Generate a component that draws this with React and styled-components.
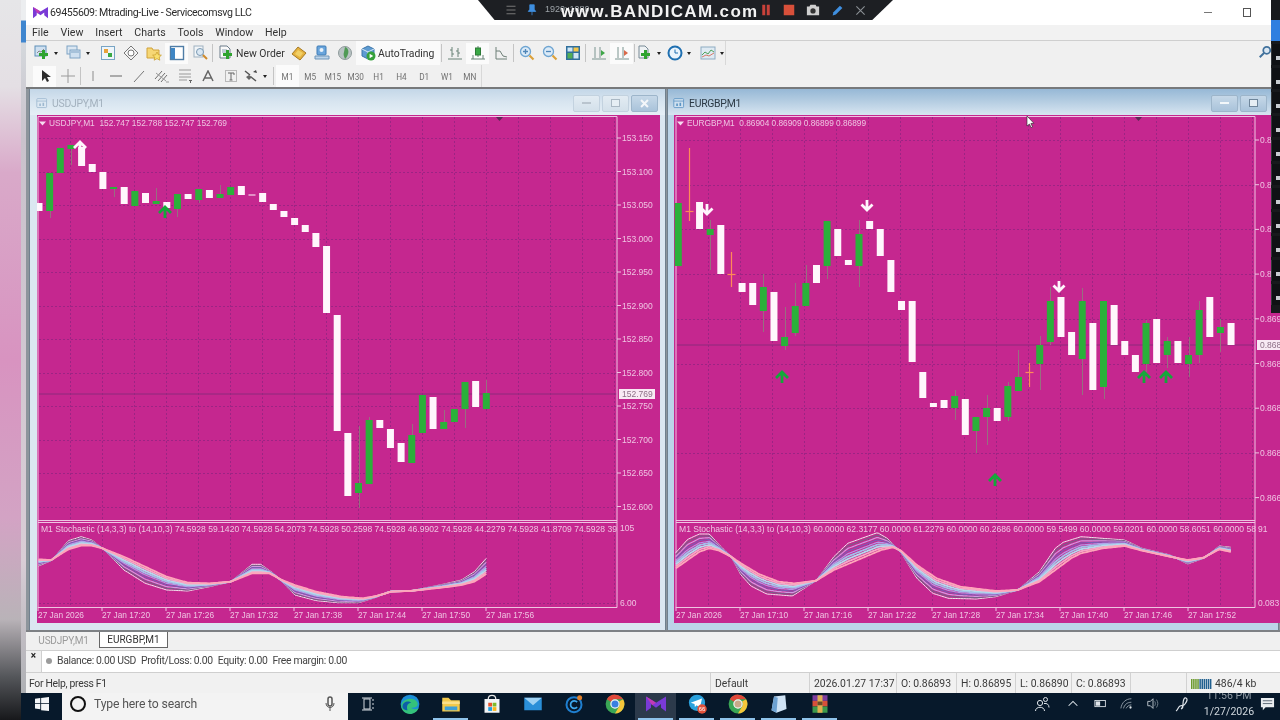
import React from "react";
import styled, { createGlobalStyle } from "styled-components";

const GlobalStyle = createGlobalStyle`
  html, body { margin: 0; padding: 0; background: #000; }
  * { box-sizing: border-box; }
`;

const PINK = "#c5278f";
const AXIS = "#efc3e2";
const GRID = "#9c2484";
const GREEN = "#2bb03a";
const WHITE = "#fff6fc";
const UP_ARROW = "#14a83a";

const Page = styled.div`
  position: relative;
  width: 1280px;
  height: 720px;
  overflow: hidden;
  display: flex;
  font-family: "Roboto", "Liberation Sans", sans-serif;
  color: #333;
  filter: blur(0.35px);
`;
const BlurredSide = styled.div`
  width: 21px;
  flex: none;
  background: linear-gradient(180deg, #e6e6e8 0%, #e4dfe4 12%, #d9a9c9 24%, #d893c0 50%, #d3a3c4 72%, #b9b3b8 86%, #54565a 94%, #17181b 100%);
`;
const Main = styled.div`
  flex: 1;
  min-width: 0;
  display: flex;
  flex-direction: column;
`;
const Upper = styled.div`
  height: 693px;
  display: flex;
`;
const WindowEdge = styled.div`
  width: 5px;
  flex: none;
  background: linear-gradient(180deg, #eceef0 0, #eceef0 20px, #3f86cf 21px, #3f86cf 42px, #d4d8dc 43px, #c9c2cc 140px, #d9cdd6 560px, #aeb0b4 100%);
`;
const AppWindow = styled.div`
  flex: 1;
  min-width: 0;
  display: flex;
  flex-direction: column;
  background: #f0f0f0;
`;

const TitleBar = styled.div`
  height: 25px;
  flex: none;
  background: #fff;
  display: flex;
  align-items: center;
  padding: 0 0 0 7px;
  font-size: 10.6px;
  color: #2c2c2c;
`;
const TitleText = styled.span`
  margin-left: 2px;
  letter-spacing: -0.37px;
`;
const WinControls = styled.div`
  margin-left: auto;
  margin-right: 29px;
  display: flex;
  gap: 31px;
  align-items: center;
`;
const MinGlyph = styled.span`
  display: block;
  width: 8px;
  height: 1px;
  background: #777;
`;
const MaxGlyph = styled.span`
  display: block;
  width: 8px;
  height: 9px;
  border: 1px solid #555;
`;

const MenuBar = styled.div`
  height: 16px;
  flex: none;
  display: flex;
  align-items: center;
  gap: 11.9px;
  padding-left: 6px;
  font-size: 10.6px;
  color: #333;
  background: #f2f2f2;
  border-bottom: 1px solid #cfcfcf;
`;
const ToolRow = styled.div`
  height: ${(p) => p.$h}px;
  flex: none;
  display: flex;
  align-items: center;
  padding-left: 7px;
  background: #f0f0f0;
  position: relative;
  border-bottom: ${(p) => (p.$last ? "2px solid #77797b" : "none")};
`;
const Strip = styled.div`
  display: flex;
  align-items: center;
  height: 100%;
  border-right: 1px solid #d8d8d8;
`;
const ToolBtn = styled.div`
  width: ${(p) => p.$w || 23}px;
  height: ${(p) => (p.$on ? "21px" : "100%")};
  flex: none;
  display: flex;
  align-items: center;
  justify-content: center;
  background: ${(p) => (p.$on ? "#fbfbfb" : "transparent")};
`;
const DropBtn = styled.div`
  width: ${(p) => p.$w || 32}px;
  flex: none;
  display: flex;
  align-items: center;
  padding-left: 1px;
  gap: 2px;
`;
const Caret = styled.span`
  width: 0;
  height: 0;
  margin-left: 2px;
  border-left: 2.5px solid transparent;
  border-right: 2.5px solid transparent;
  border-top: 3px solid #222;
`;
const Sep = styled.span`
  flex: none;
  width: 1px;
  height: 18px;
  margin: 0 ${(p) => p.$m || 1}px;
  background: #c4c4c4;
`;
const LabelBtn = styled.div`
  width: ${(p) => p.$w}px;
  height: 100%;
  flex: none;
  display: flex;
  align-items: center;
  gap: 2px;
  padding-left: 4px;
  font-size: 10.4px;
  color: #333;
  background: ${(p) => (p.$on ? "#fafafa" : "transparent")};
`;
const Period = styled.div`
  width: 22.8px;
  height: 100%;
  flex: none;
  display: flex;
  align-items: center;
  justify-content: center;
  padding-top: 1px;
  font-size: 8.2px;
  color: #707070;
  background: ${(p) => (p.$on ? "#fbfbfb" : "transparent")};
`;
const SearchGlyph = styled.div`
  position: absolute;
  right: 8px;
  top: 4px;
`;

const Mdi = styled.div`
  height: 543px;
  flex: none;
  display: flex;
  gap: 1px;
  padding-left: 3px;
  background: #8d959c;
  border-bottom: 2px solid #7d8084;
`;
const ChartWindow = styled.div`
  width: ${(p) => p.$w}px;
  flex: none;
  display: flex;
  flex-direction: column;
  padding: 0 ${(p) => p.$pr}px 7px ${(p) => p.$pl}px;
  border-left: 1px solid #70808e;
  border-right: 1px solid #70808e;
  background: ${(p) => (p.$active ? "#bcd4e8" : "#dbe7f1")};
`;
const WinHeader = styled.div`
  height: 26px;
  flex: none;
  margin: 0 -${(p) => p.$pr}px 0 -${(p) => p.$pl}px;
  padding: 2px ${(p) => p.$br}px 0 ${(p) => p.$pl - 1}px;
  display: flex;
  align-items: center;
  gap: 3px;
  font-size: 10.4px;
  letter-spacing: -0.25px;
  color: ${(p) => (p.$active ? "#2c3a46" : "#a3b1be")};
  background: ${(p) =>
    p.$active
      ? "linear-gradient(180deg, #96b8d6 0%, #b3cce1 45%, #d7e5f1 100%)"
      : "linear-gradient(180deg, #c4d7e8 0%, #d8e5f0 50%, #e6eff6 100%)"};
`;
const HeaderBtns = styled.div`
  margin-left: auto;
  display: flex;
  gap: 2px;
`;
const HeaderBtn = styled.div`
  width: 27px;
  height: 17px;
  border: 1px solid ${(p) => (p.$active ? "#9db5ca" : "#c3d2df")};
  border-radius: 2px;
  background: ${(p) => (p.$active ? "linear-gradient(180deg, #c6d8e8, #a9c3da)" : "linear-gradient(180deg, #e3ecf3, #d3e0ea)")};
  display: flex;
  align-items: center;
  justify-content: center;
  color: ${(p) => (p.$active ? "#f3f7fa" : "#b9c4ce")};
`;
const MinBar = styled.span`
  display: block;
  width: 9px;
  height: 2px;
  background: currentColor;
`;
const MaxBox = styled.span`
  display: block;
  width: 9px;
  height: 8px;
  border: 1.5px solid ${(p) => (p.$active ? "#6f869b" : "#aab8c4")};
  background: #e6eef4;
`;
const ChartSvg = styled.svg`
  display: block;
  flex: none;
  background: ${PINK};
  font-family: "Liberation Sans", sans-serif;
  font-size: 8.5px;
`;
const IconSvg = styled.svg`
  display: block;
  flex: none;
`;

const TabBar = styled.div`
  height: 19px;
  flex: none;
  display: flex;
  align-items: flex-start;
  padding-left: 2px;
  border-bottom: 1px solid #cfcfcf;
`;
const Tab = styled.div`
  width: ${(p) => p.$w}px;
  height: 16px;
  display: flex;
  align-items: center;
  justify-content: center;
  font-size: 10px;
  letter-spacing: ${(p) => (p.$active ? "0" : "-0.2px")};
  color: ${(p) => (p.$active ? "#333" : "#9a9a9a")};
  background: ${(p) => (p.$active ? "#fff" : "transparent")};
  border: ${(p) => (p.$active ? "1px solid #666" : "none")};
  border-top: none;
`;
const Terminal = styled.div`
  height: 22px;
  flex: none;
  display: flex;
  border-bottom: 1px solid #cfcfcf;
`;
const TerminalClose = styled.div`
  width: 15px;
  flex: none;
  text-align: center;
  font-size: 10px;
  line-height: 10px;
  font-weight: 700;
  color: #222;
`;
const BalancePanel = styled.div`
  flex: 1;
  display: flex;
  align-items: center;
  gap: 5px;
  padding: 0 0 2px 4px;
  background: #fff;
  border-left: 1px solid #cfcfcf;
  font-size: 10.4px;
  letter-spacing: -0.33px;
  color: #444;
`;
const Dot = styled.span`
  width: 6px;
  height: 6px;
  border-radius: 50%;
  background: #9b9b9b;
`;
const StatusBar = styled.div`
  height: 20px;
  flex: none;
  display: flex;
  align-items: center;
  font-size: 10.4px;
  color: #3a3a3a;
  background: #f1f1f1;
`;
const StatusHelp = styled.div`
  width: 684px;
  padding: 1px 0 0 3px;
  letter-spacing: -0.3px;
`;
const StatusCell = styled.div`
  width: ${(p) => p.$w}px;
  height: 100%;
  flex: none;
  display: flex;
  align-items: center;
  gap: 3px;
  padding: 1px 0 0 4px;
  border-left: 1px solid #d2d2d2;
`;

const Taskbar = styled.div`
  height: 27px;
  flex: none;
  display: flex;
  align-items: stretch;
  background: #07192b;
`;
const StartBtn = styled.div`
  width: 41px;
  flex: none;
  display: flex;
  align-items: center;
  justify-content: center;
  padding-bottom: 5px;
`;
const SearchBox = styled.div`
  width: 286px;
  flex: none;
  display: flex;
  align-items: center;
  gap: 8px;
  padding: 0 10px 5px 8px;
  background: #f3f3f3;
  font-size: 12.2px;
  letter-spacing: -0.15px;
  color: #555;
`;
const SearchRing = styled.span`
  width: 16px;
  height: 16px;
  border-radius: 50%;
  border: 2.5px solid #111;
`;
const MicSlot = styled.span`
  margin-left: auto;
  display: flex;
`;
const TaskIcon = styled.div`
  position: relative;
  width: 41px;
  flex: none;
  display: flex;
  align-items: center;
  justify-content: center;
  padding-bottom: 5px;
  background: ${(p) => (p.$on ? "#2c3a4b" : "transparent")};
  &::after {
    content: "";
    display: ${(p) => (p.$running ? "block" : "none")};
    position: absolute;
    left: 3px;
    right: 3px;
    bottom: 0;
    height: 2px;
    background: #8fc3ea;
  }
`;
const Tray = styled.div`
  margin-left: auto;
  display: flex;
  align-items: center;
  padding-bottom: 5px;
`;
const TrayIcon = styled.div`
  width: ${(p) => p.$w}px;
  flex: none;
  display: flex;
  justify-content: center;
`;
const Clock = styled.div`
  width: 62px;
  height: 27px;
  flex: none;
  margin-bottom: -5px;
  overflow: hidden;
  text-align: center;
  font-size: 10.6px;
  line-height: 13px;
  color: #cfd6dc;
`;
const ClockTime = styled.div`
  margin-top: -4px;
  color: #8e99a3;
`;
const ClockDate = styled.div`
  margin-top: 3px;
`;
const Notify = styled.div`
  width: 20px;
  flex: none;
  display: flex;
  justify-content: flex-start;
`;

const RecorderBar = styled.div`
  position: absolute;
  left: 478px;
  top: 0;
  width: 415px;
  height: 20px;
  display: flex;
  align-items: center;
  gap: 9px;
  padding-left: 27px;
  background: #1d1f23;
  clip-path: polygon(0 0, 100% 0, 95% 100%, 4% 100%);
  font-family: "Liberation Sans", sans-serif;
`;
const RecorderSize = styled.span`
  position: absolute;
  left: 67px;
  top: 4px;
  font-size: 9px;
  color: #9da3a8;
`;
const Watermark = styled.span`
  position: absolute;
  left: 83px;
  top: 2px;
  font-size: 17px;
  font-weight: 700;
  letter-spacing: 1.35px;
  color: #f3f3f3;
  white-space: nowrap;
`;
const RecorderTools = styled.div`
  position: absolute;
  left: 282px;
  top: 3px;
  display: flex;
  align-items: center;
  gap: 11px;
`;
const RightDock = styled.div`
  position: absolute;
  right: 0;
  top: 0;
  width: 9px;
  height: 313px;
  padding-top: 20px;
  display: flex;
  flex-direction: column;
  gap: 3px;
  background: #17191c;
`;
const DockBlue = styled.div`
  height: 21px;
  background: #2f7fe0;
`;
const DockItem = styled.div`
  height: 21px;
  background: #0f1114;
  border-left: 1px solid #33373b;
  position: relative;
  &::after {
    content: "";
    position: absolute;
    left: 4px;
    top: 12px;
    width: 5px;
    height: 4px;
    background: #c8ccd0;
  }
`;

/* ---------- chart data ---------- */
// [type, bodyTop, bodyBottom, wickTop, wickBottom]
const usdCandles = [
  ["w",203,211],["g",173,211,173,218],["g",148,173],["g",145,149,145,165],["w",147,166],
  ["w",164,172],["w",172,189],["g",187,189,187,197],["w",187,204],["g",191,206],
  ["w",193,203],["g",201,204,188,204],["w",202,208],["g",194,209,194,217],["w",194,199],
  ["g",189,200,189,203],["w",190,198],["g",194,198,185,198],["g",187,195],["w",186,195],
  ["w",194.5,195.5],["w",193,202],["w",204,210],["w",211,217],["w",218,225],
  ["w",225,232],["w",233,247],["w",246,313],["w",315,431],["w",433,496],
  ["g",483,493,426,508],["g",420,484,417,484],["w",420,428],["w",429,448],["w",443,462],
  ["g",435,463,424,463],["g",395,433],["w",397,429],["g",422,429,410,429],["g",409,422],
  ["g",382,409,382,428],["w",381,407],["g",393,409,380,409],
];
const eurCandles = [
  ["g",203,266],["o",211,211,148,221],["w",202,229],["g",229,235,220,270],["w",225,274],
  ["o",274,274,252,287],["w",283,292],["w",283,305],["g",287,311,274,332],["w",292,341],
  ["g",337,346,307,350],["g",306,333,283,336],["g",283,306,265,306],["w",265,283],["g",221,266,221,279],
  ["w",229,256],["w",260,265],["g",234,266,220,287],["w",221,229],["w",229,256],
  ["w",260,292],["w",301,310],["w",301,362],["w",372,398],["w",403,407],
  ["w",400,408],["g",396,408,390,420],["w",399,435],["g",417,431,417,453],["g",408,417,395,445],
  ["w",408,421],["g",386,417,382,421],["g",377,391,350,391],["o",372,372,363,387],["g",345,364,336,390],
  ["g",301,342,287,345],["w",297,337],["w",332,355],["g",301,359,288,395],["w",323,390],
  ["g",301,387,301,399],["w",305,345],["w",341,355],["w",355,372],["g",323,364,320,372],
  ["w",319,363],["g",341,355,337,368],["w",341,363],["g",355,364,337,377],["g",310,355,301,363],
  ["w",297,337],["g",327,333,319,352],["w",323,345],
];

// fast (white) and slow (pink) stochastic edges as zoomed [x, y] pairs
const usdFast = [[90,168],[120,152],[160,92],[190,80],[215,90],[240,115],[290,180],[340,220],[390,240],[440,243],[490,230],[540,215],[590,163],[610,163],[640,190],[690,255],[740,272],[790,278],[840,278],[880,262],[915,243],[960,243],[1040,222],[1080,210],[1110,185],[1138,145]];
const usdSlow = [[90,148],[120,150],[160,118],[190,107],[215,107],[240,115],[290,140],[340,170],[390,200],[440,218],[490,220],[540,215],[590,190],[630,190],[660,210],[690,225],[740,245],[800,260],[850,265],[880,258],[915,245],[960,243],[1040,232],[1080,225],[1110,215],[1138,192]];
const eurFast = [[40,128],[70,88],[100,72],[125,72],[150,105],[180,140],[205,195],[230,228],[270,252],[335,258],[395,212],[440,140],[475,100],[510,85],[550,68],[575,85],[610,128],[650,205],[690,250],[730,265],[800,267],[850,260],[905,240],[960,185],[1000,115],[1020,97],[1065,80],[1120,85],[1175,90],[1220,115],[1290,135],[1335,162],[1375,145],[1415,108],[1445,112]];
const eurSlow = [[40,175],[70,150],[100,125],[125,115],[150,122],[180,140],[205,160],[250,192],[300,215],[340,220],[395,212],[440,180],[500,150],[560,120],[590,112],[610,122],[650,165],[700,205],[760,230],[850,243],[905,240],[960,215],[1000,180],[1040,145],[1065,130],[1120,115],[1175,108],[1220,122],[1290,140],[1335,150],[1375,143],[1415,118],[1445,126]];
const ribbonColors = ["#f0e8ee", "#7a5f88", "#d09ae0", "#7d5cb4", "#b696e6", "#a4c0ea", "#b4dcec", "#f7a8c6", "#ffa6ba"];

const sampleAt = (pts, x) => {
  for (let i = 1; i < pts.length; i++) {
    if (x <= pts[i][0]) {
      const t = (x - pts[i - 1][0]) / (pts[i][0] - pts[i - 1][0]);
      return pts[i - 1][1] + (pts[i][1] - pts[i - 1][1]) * t;
    }
  }
  return pts[pts.length - 1][1];
};

const Ribbon = ({ fast, slow, sx, ox }) => {
  const start = fast[0][0];
  const end = fast[fast.length - 1][0];
  const lines = ribbonColors.map((color, i) => {
    const t = i / (ribbonColors.length - 1);
    let d = "";
    for (let x = start; x <= end; x += 4) {
      const y = sampleAt(fast, x) * (1 - t) + sampleAt(slow, x) * t;
      d += `${d ? "L" : "M"}${(ox + x / sx).toFixed(1)} ${(510 + y / 3).toFixed(1)}`;
    }
    return <path key={color} d={d} fill="none" stroke={color} strokeWidth={i === 0 ? 1 : i >= 5 ? 1.8 : 1.2} />;
  });
  return <g>{lines}</g>;
};

const Candles = ({ data, x0, step }) =>
  data.map(([type, top, bottom, wt, wb], i) => {
    const x = x0 + i * step;
    const wx = Math.round(x) + 0.5;
    if (type === "o") {
      return (
        <g key={i} stroke="#ff8a58" strokeWidth="1.2">
          <line x1={wx} x2={wx} y1={wt} y2={wb} />
          <line x1={wx - 4} x2={wx + 4} y1={top + 0.5} y2={top + 0.5} />
        </g>
      );
    }
    return (
      <g key={i}>
        {wt !== undefined && <line x1={wx} x2={wx} y1={wt} y2={wb} stroke="#96707f" strokeWidth="1" />}
        <rect x={x - 3.5} y={top} width="7" height={bottom - top} fill={type === "g" ? GREEN : WHITE} />
      </g>
    );
  });

const Arrow = ({ x, y, up, color }) => (
  <path
    d={up ? `M${x} ${y + 12}V${y + 1}M${x - 6} ${y + 7}L${x} ${y + 1}L${x + 6} ${y + 7}` : `M${x} ${y}V${y + 10}M${x - 5.5} ${y + 4.5}L${x} ${y + 10}L${x + 5.5} ${y + 4.5}`}
    fill="none"
    stroke={color}
    strokeWidth="2.8"
  />
);

const Grid = ({ left, right, xs, ys, top, bottom }) => (
  <g stroke={GRID} strokeWidth="1" strokeDasharray="2 2">
    {xs.map((x) => <line key={x} x1={x + 0.5} x2={x + 0.5} y1={top} y2={bottom} />)}
    {ys.map((y) => <line key={y} x1={left} x2={right} y1={Math.round(y) + 0.5} y2={Math.round(y) + 0.5} />)}
  </g>
);

const range = (from, to, step) => {
  const out = [];
  for (let v = from; v <= to; v += step) out.push(v);
  return out;
};

const Frame = ({ left, right }) => (
  <g fill="none" stroke={AXIS} strokeWidth="1">
    <path d={`M${left} 116.5H${right}V607.5H${left}Z`} />
    <path d={`M${left} 520.5H${right}M${left} 522.5H${right}`} />
  </g>
);

const TimeAxis = ({ left, labels }) =>
  labels.map((t, i) => {
    const x = left + i * 64;
    return (
      <g key={t}>
        <line x1={x} x2={x} y1="607" y2="611" stroke={AXIS} />
        <text x={x} y="618" fill={AXIS} textLength={i === 0 ? 46 : 48} lengthAdjust="spacingAndGlyphs">{t}</text>
      </g>
    );
  });

const ChartHead = ({ x, text, len }) => (
  <g>
    <path d={`M${x - 4} 121.5h7l-3.5 4z`} fill="#f6dcef" />
    <text x={x + 6} y="126" fill={AXIS} textLength={len} lengthAdjust="spacingAndGlyphs">{text}</text>
  </g>
);

const usdPrices = ["153.150","153.100","153.050","153.000","152.950","152.900","152.850","152.800","152.750","152.700","152.650","152.600"];
const usdTimes = ["27 Jan 2026","27 Jan 17:20","27 Jan 17:26","27 Jan 17:32","27 Jan 17:38","27 Jan 17:44","27 Jan 17:50","27 Jan 17:56"];
const eurTimes = ["27 Jan 2026","27 Jan 17:10","27 Jan 17:16","27 Jan 17:22","27 Jan 17:28","27 Jan 17:34","27 Jan 17:40","27 Jan 17:46","27 Jan 17:52"];
// the window runs past the screen edge, so only the start of each price shows
const eurPrices = ["0.8","0.8","0.8","0.8","0.869","0.868","0.868","0.868","0.866"];

const UsdChart = () => {
  const ys = range(0, 11, 1).map((i) => 138 + i * 33.5);
  const xs = range(70, 617, 32);
  return (
    <ChartSvg width="623" height="508" viewBox="37 115 623 508">
      <Grid left={39} right={617} xs={xs} ys={ys} top={117} bottom={520} />
      <Grid left={39} right={617} xs={xs} ys={[]} top={523} bottom={607} />
      <line x1="39" x2="617" y1="603.5" y2="603.5" stroke={GRID} strokeDasharray="2 2" />
      <line x1="39" x2="617" y1="394" y2="394" stroke="#8d2a7c" />
      <Frame left={38} right={617} />
      <path d="M496 117h7l-3.5 4z" fill="#5a2a55" />
      <ChartHead x={43} text={"USDJPY,M1\u00A0\u00A0152.747 152.788 152.747 152.769"} len={178} />
      <Candles data={usdCandles} x0={39} step={10.65} />
      <Arrow x={80} y={141} up color={WHITE} />
      <Arrow x={165} y={206} up color={UP_ARROW} />
      {usdPrices.map((p, i) => (
        <g key={p}>
          <line x1="617" x2="621" y1={ys[i]} y2={ys[i]} stroke={AXIS} />
          <text x="622" y={ys[i] + 3} fill={AXIS}>{p}</text>
        </g>
      ))}
      <rect x="619" y="389" width="36" height="10" fill="#f8eaf4" />
      <text x="622" y="397" fill="#8d6f86">152.769</text>
      <text x="41" y="532" fill={AXIS} textLength="576" lengthAdjust="spacingAndGlyphs">
        M1 Stochastic (14,3,3) to (14,10,3) 74.5928 59.1420 74.5928 54.2073 74.5928 50.2598 74.5928 46.9902 74.5928 44.2279 74.5928 41.8709 74.5928 39
      </text>
      <Ribbon fast={usdFast} slow={usdSlow} sx={2.34} ox={0} />
      <text x="620" y="531" fill={AXIS}>105</text>
      <text x="620" y="606" fill={AXIS}>6.00</text>
      <TimeAxis left={38} labels={usdTimes} />
    </ChartSvg>
  );
};

const EurChart = () => {
  const ys = range(0, 8, 1).map((i) => 140 + i * 44.7);
  const xs = range(708, 1255, 32);
  return (
    <ChartSvg width="606" height="508" viewBox="674 115 606 508">
      <Grid left={677} right={1255} xs={xs} ys={ys} top={117} bottom={520} />
      <Grid left={677} right={1255} xs={xs} ys={[]} top={523} bottom={607} />
      <line x1="677" x2="1255" y1="345" y2="345" stroke="#8d2a7c" />
      <Frame left={676} right={1255} />
      <path d="M1135 117h7l-3.5 4z" fill="#5a2a55" />
      <ChartHead x={681} text={"EURGBP,M1\u00A0\u00A00.86904 0.86909 0.86899 0.86899"} len={179} />
      <Candles data={eurCandles} x0={678.3} step={10.63} />
      <Arrow x={707} y={204} color={WHITE} />
      <Arrow x={867} y={200} color={WHITE} />
      <Arrow x={1059} y={281} color={WHITE} />
      <Arrow x={782} y={371} up color={UP_ARROW} />
      <Arrow x={995} y={474} up color={UP_ARROW} />
      <Arrow x={1144} y={371} up color={UP_ARROW} />
      <Arrow x={1166} y={371} up color={UP_ARROW} />
      {ys.map((y, i) => (
        <g key={y}>
          <line x1="1255" x2="1259" y1={y} y2={y} stroke={AXIS} />
          <text x="1260" y={y + 3} fill={AXIS}>{eurPrices[i]}</text>
        </g>
      ))}
      <rect x="1257" y="340" width="24" height="10" fill="#f8eaf4" />
      <text x="1260" y="348" fill="#8d6f86">0.868</text>
      <text x="679" y="532" fill={AXIS} textLength="577" lengthAdjust="spacingAndGlyphs">
        M1 Stochastic (14,3,3) to (14,10,3) 60.0000 62.3177 60.0000 61.2279 60.0000 60.2686 60.0000 59.5499 60.0000 59.0201 60.0000 58.6051 60.0000 58
      </text>
      <Ribbon fast={eurFast} slow={eurSlow} sx={2.53} ox={660} />
      <text x="1258" y="532" fill={AXIS}>91</text>
      <text x="1258" y="606" fill={AXIS}>0.083</text>
      <TimeAxis left={676} labels={eurTimes} />
      <path d="M1027 116v10l2.4-2 1.8 3.6 1.4-.7-1.7-3.4 3-.2z" fill="#fff" stroke="#222" strokeWidth=".6" />
    </ChartSvg>
  );
};

/* ---------- small icons ---------- */
const I = ({ s = 16, vb = "0 0 16 16", children }) => (
  <IconSvg width={s} height={s} viewBox={vb}>{children}</IconSvg>
);
const Plus = ({ x = 7, y = 7 }) => (
  <path d={`M${x + 3} ${y}h3v3h3v3h-3v3h-3v-3h-3v-3h3z`} fill="#2fa32f" />
);
const NewChartIcon = () => (
  <I><rect x="1" y="1" width="11" height="10" fill="#cfe0f0" stroke="#5f8fb8" /><path d="M3 8l2-2 2 1 3-3" stroke="#888" fill="none" /><Plus x={5} y={5} /></I>
);
const ProfilesIcon = () => (
  <I><rect x="1" y="1" width="10" height="8" fill="#dbe7f2" stroke="#7fa3c4" /><rect x="4" y="5" width="10" height="8" fill="#cfe0f0" stroke="#7fa3c4" /><path d="M5 7h8" stroke="#7fa3c4" /></I>
);
const WatchIcon = () => (
  <I><rect x="1.5" y="1.5" width="13" height="13" fill="#eef5fa" stroke="#78a4c4" /><rect x="4" y="4" width="4" height="4" fill="#e8a23a" /><rect x="8" y="8" width="4" height="4" fill="#39a845" /></I>
);
const NavCrossIcon = () => (
  <I><path d="M8 1l7 7-7 7-7-7z" fill="#f4f4f4" stroke="#777" /><circle cx="8" cy="8" r="3" fill="#fff" stroke="#777" /></I>
);
const FolderStarIcon = () => (
  <I><path d="M1 3h5l1 2h6v8H1z" fill="#f6d775" stroke="#d0a23a" /><path d="M11 7l1.4 2.8 3 .4-2.2 2 .6 3-2.8-1.5-2.8 1.5.6-3-2.2-2 3-.4z" fill="#f9df6f" stroke="#c69a2a" strokeWidth=".7" /></I>
);
const PanelIcon = () => (
  <I><rect x="1.5" y="1.5" width="13" height="13" fill="#fff" stroke="#4f7da6" strokeWidth="1.4" /><rect x="2" y="3" width="4" height="11" fill="#3f86c4" /></I>
);
const TesterIcon = () => (
  <I><rect x="2" y="1" width="9" height="11" fill="#f1f5f8" stroke="#9fb1c0" /><circle cx="8" cy="7" r="3.5" fill="#d9e7f3" stroke="#7998b2" /><path d="M11 10l4 4" stroke="#d08a2a" strokeWidth="2" /></I>
);
const OrderIcon = () => (
  <I><path d="M2 1h7l3 3v9H2z" fill="#fafafa" stroke="#6c7c8a" /><path d="M4 5h5M4 7h5" stroke="#8fa3b5" /><Plus x={5} y={5} /></I>
);
const GoldIcon = () => (
  <I><path d="M1 9l6-7 8 6-6 7z" fill="#e5b23f" stroke="#a57a25" /><path d="M4 9l3-4 5 3-3 4z" fill="#f1d067" /></I>
);
const DeskIcon = () => (
  <I><rect x="3" y="1" width="9" height="9" rx="1" fill="#6aa5dc" stroke="#3f7cb6" /><path d="M1 11h14v3H1z" fill="#bcd4ea" stroke="#6e96ba" /><circle cx="7.5" cy="5" r="2" fill="#e8f1f9" /></I>
);
const GlobeIcon = () => (
  <I><circle cx="8" cy="8" r="6.5" fill="#b9c3c4" stroke="#8f9a9b" /><path d="M8 2c3 1 4 4 3 7s-2 4-3 5c-1-3-2-4-1-7z" fill="#4f9a55" /></I>
);
const AutoIcon = () => (
  <I><path d="M8 1l6 3v7l-6 3-6-3V4z" fill="#5d9bd2" stroke="#3c76aa" /><path d="M2 4l6 3 6-3M8 7v7" stroke="#d7e7f4" fill="none" /><circle cx="11" cy="11" r="4.5" fill="#36a13c" /><path d="M9.6 8.8l3.6 2.2-3.6 2.2z" fill="#fff" /></I>
);
const BarsIcon = () => (
  <I><path d="M5 2v10M3 5h2M5 9h2M11 3v9M9 6h2M11 8h2M1 14h14" stroke="#6a8478" fill="none" /></I>
);
const CandleIcon = () => (
  <I><path d="M8 1v11M1 14h14M3 14V10M13 14V10" stroke="#6a8478" fill="none" /><rect x="5.5" y="3" width="5" height="7" fill="#39a845" stroke="#2c7a36" /></I>
);
const LineIcon = () => (
  <I><path d="M3 2v12h11M3 6l4 0 3 5 4 1" stroke="#6f8078" fill="none" /></I>
);
const ZoomIcon = ({ plus }) => (
  <I><circle cx="6.5" cy="6.5" r="5" fill="#dbeaf7" stroke="#6fa5d2" strokeWidth="1.3" /><path d={plus ? "M4 6.5h5M6.5 4v5" : "M4 6.5h5"} stroke="#4f86b8" strokeWidth="1.3" /><path d="M10.5 10.5l4 4" stroke="#dba13a" strokeWidth="2.2" /></I>
);
const TileIcon = () => (
  <I><rect x="1" y="1" width="14" height="14" fill="#2f6f9c" /><rect x="2.5" y="2.5" width="5" height="4" fill="#cfe6f5" /><rect x="8.5" y="2.5" width="5" height="4" fill="#f3c64a" /><rect x="2.5" y="8" width="5" height="5.5" fill="#53ad55" /><rect x="8.5" y="8" width="5" height="5.5" fill="#cfe6f5" /></I>
);
const ShiftIcon = ({ color }) => (
  <I><path d="M4 2v11M1 14h14M9 2v11" stroke="#7a9490" fill="none" /><path d="M10 5l4 3-4 3z" fill={color} /></I>
);
const IndicatorIcon = () => (
  <I><path d="M2 1h6l3 3v9H2z" fill="#eef2f4" stroke="#788a96" /><Plus x={4} y={5} /></I>
);
const ClockIcon = () => (
  <I><circle cx="8" cy="8" r="6.5" fill="#eaf3fb" stroke="#1f6fb0" strokeWidth="2" /><path d="M8 4.5V8h3" stroke="#1f6fb0" fill="none" /></I>
);
const TemplateIcon = () => (
  <I><rect x="1" y="2" width="14" height="12" fill="#dfeaf3" stroke="#8eabc2" /><path d="M2 10l3-3 3 2 3-4 3 2" stroke="#4fa25a" fill="none" /><path d="M2 12l4-2 3 1 5-3" stroke="#d67a6a" fill="none" /></I>
);
const PointerIcon = () => (
  <I><path d="M5 2v11l3-3 2 4 2-1-2-4h4z" fill="#2c2c2c" /></I>
);
const CrossIcon = () => (
  <I><path d="M8 1v14M1 8h14" stroke="#9a9a9a" /></I>
);
const VLineIcon = () => <I><path d="M8 3v10" stroke="#8c8c8c" /></I>;
const HLineIcon = () => <I><path d="M2 8h12" stroke="#666" /></I>;
const TrendIcon = () => <I><path d="M3 14L13 3" stroke="#777" /></I>;
const ChannelIcon = () => (
  <I><path d="M1 11l7-8M4 13l7-8M7 14l6-7" stroke="#6f6f6f" /><path d="M2 5l10 8M12 14h3" stroke="#9a9a9a" /></I>
);
const FiboIcon = () => (
  <I><path d="M2 2h12M2 6h12M2 9h12M2 12h8" stroke="#9a9a9a" /><path d="M12 12h3v1h-1v2h-1v-2h-1z" fill="#666" /></I>
);
const LetterAIcon = () => (
  <I s={12} vb="0 0 12 12"><path d="M1 11L6 1l5 10M3 8h6" fill="none" stroke="#666" strokeWidth="1.5" /></I>
);
const TextBoxIcon = () => (
  <I><rect x="2.5" y="2.5" width="11" height="11" fill="none" stroke="#b9b9b9" /><path d="M5 5h6v2M8 5v7M6.5 12h3" stroke="#666" fill="none" /></I>
);
const ShapesIcon = () => (
  <I><path d="M2 3l5 4M8 9l5 4" stroke="#555" strokeWidth="1.5" /><path d="M3 9l3 3 3-3-3-2z" fill="#666" /><path d="M10 4l3-2 1 3z" fill="#444" /></I>
);
const MLogo = ({ s = 15 }) => (
  <IconSvg width={s} height={s} viewBox="0 0 16 14">
    <path d="M0 1l8 5 8-5v12l-4-3V7L8 10 4 7v3l-4 3z" fill="#7a3ad6" />
    <path d="M0 1l5 3 3 2-3 2z" fill="#c23ab4" />
  </IconSvg>
);
const MagnifierIcon = () => (
  <I s={14}><circle cx="10" cy="6" r="4" fill="#dbe7f2" stroke="#41719c" strokeWidth="2" /><path d="M7 9l-5 5" stroke="#41719c" strokeWidth="2.4" /></I>
);
const ChartTag = ({ muted }) => (
  <I s={13}><rect x="1" y="2" width="12" height="11" rx="1" fill={muted ? "#dce8f2" : "#cfe0ef"} stroke={muted ? "#9db8cf" : "#5b94c4"} /><path d="M1 5h12" stroke={muted ? "#9db8cf" : "#5b94c4"} /><path d="M4 8h2v3H4zM8 7h2v4H8z" fill={muted ? "#9db8cf" : "#5b94c4"} /></I>
);
const SignalIcon = () => (
  <IconSvg width="21" height="10" viewBox="0 0 21 10">
    {range(0, 9, 1).map((i) => (
      <rect key={i} x={i * 2.1} y={0} width="1.5" height="10" fill={i < 4 ? "#6c9a2e" : "#20608f"} />
    ))}
  </IconSvg>
);

/* taskbar */
const WinLogo = () => (
  <I s={14}><path d="M0 2l6-1v6H0zM7 1l9-1v7H7zM0 8h6v6l-6-1zM7 8h9v8l-9-1z" fill="#f4f6f8" /></I>
);
const MicIcon = () => (
  <I><rect x="6" y="1" width="4" height="9" rx="2" fill="none" stroke="#555" strokeWidth="1.5" /><path d="M4 7c0 6 8 6 8 0M8 12v3" stroke="#555" fill="none" /></I>
);
const TaskViewIcon = () => (
  <I><rect x="3" y="3" width="6" height="10" fill="none" stroke="#d4dae0" /><path d="M1 2h10M1 14h10M12 3v2M12 7v2M12 11v2" stroke="#d4dae0" /></I>
);
const EdgeIcon = () => (
  <I s={20}><circle cx="8" cy="8" r="7.5" fill="#1b8ed8" /><path d="M1 9c1-6 11-7 13-2 1 3-2 4-5 4 2 2 5 1 6 0-1 3-4 5-7 5-4 0-7-3-7-7z" fill="#34c27b" /><path d="M2 10c0-4 5-5 7-3-3 0-4 3-3 6-2 0-4-1-4-3z" fill="#0d5da8" /></I>
);
const FolderIcon = () => (
  <I s={20}><path d="M1 3h5l2 2h7v9H1z" fill="#f3c94b" /><rect x="3" y="10" width="10" height="3" fill="#3ea0d8" /><path d="M1 6h14v2H1z" fill="#fbe08a" /></I>
);
const StoreIcon = () => (
  <I s={20}><path d="M5 4c0-4 6-4 6 0" fill="none" stroke="#e8e8e8" /><rect x="2" y="4" width="12" height="11" fill="#f2f4f6" /><rect x="5" y="7" width="3" height="3" fill="#e8512b" /><rect x="8.5" y="7" width="3" height="3" fill="#7fba2c" /><rect x="5" y="10.5" width="3" height="3" fill="#1f9ee0" /><rect x="8.5" y="10.5" width="3" height="3" fill="#f8b61c" /></I>
);
const MailIcon = () => (
  <I s={20}><rect x="1" y="3" width="14" height="10" fill="#2a8fd8" /><path d="M1 3l7 6 7-6" fill="#9fd2f4" /></I>
);
const CAppIcon = () => (
  <I s={20}><circle cx="8" cy="8.5" r="6" fill="none" stroke="#1f7fd0" strokeWidth="1.6" /><path d="M10.5 6.5a3 3 0 100 4" fill="none" stroke="#3da7ec" strokeWidth="1.4" /><circle cx="12.5" cy="3" r="2" fill="#e2812c" /></I>
);
const ChromeIcon = ({ s = 20, inner = "#3a7fe0" }) => (
  <I s={s}>
    <circle cx="8" cy="8" r="7.5" fill="#3aa655" />
    <path d="M8 .5a7.5 7.5 0 016.5 3.75H8a3.75 3.75 0 00-3.25 1.9L1.5 4.2A7.5 7.5 0 018 .5z" fill="#e0483a" />
    <path d="M14.5 4.25A7.5 7.5 0 018 15.5l3.25-5.6A3.75 3.75 0 0011.2 6z" fill="#f5c63a" />
    <circle cx="8" cy="8" r="3.3" fill={inner} stroke="#f3f3f3" strokeWidth="1" />
  </I>
);
const TelegramIcon = () => (
  <I s={20}><circle cx="8" cy="7" r="6.5" fill="#2aa1dc" /><path d="M3 7l9-3.5-1.6 7.5-2.7-2-1.4 1.4-.3-2.4z" fill="#fff" /><circle cx="12" cy="12" r="3.8" fill="#e2513a" /><text x="12" y="13.7" textAnchor="middle" fontSize="4.6" fill="#fff" fontFamily="Liberation Sans">66</text></I>
);
const NotesIcon = () => (
  <I s={20}><path d="M4 2l9-1 1 11-8 3-4-2z" fill="#cfe3f5" /><path d="M2 13l4 2 1-12-3-1z" fill="#6da2d2" /></I>
);
const WinrarIcon = () => (
  <I s={20}><rect x="2" y="1" width="12" height="4.5" fill="#7d3d9e" /><rect x="2" y="5.5" width="12" height="4.5" fill="#d8503a" /><rect x="2" y="10" width="12" height="5" fill="#3d9a4c" /><rect x="6" y="1" width="4" height="14" fill="#e0b050" /><rect x="6" y="6" width="4" height="3" fill="#6a4a2a" /></I>
);
const PeopleIcon = () => (
  <I><circle cx="6" cy="7" r="2.6" fill="none" stroke="#dfe5ea" /><path d="M1.5 15c0-5 9-5 9 0" fill="none" stroke="#dfe5ea" /><circle cx="11.5" cy="3.5" r="2" fill="none" stroke="#dfe5ea" /><path d="M10 7.5c3-.5 5 1 5 4" fill="none" stroke="#dfe5ea" /></I>
);
const ChevronIcon = () => <I s={14}><path d="M3 10l5-5 5 5" fill="none" stroke="#dfe5ea" strokeWidth="1.2" /></I>;
const BatteryIcon = () => (
  <I s={14}><rect x="1" y="4" width="12" height="7" fill="none" stroke="#dfe5ea" /><rect x="2" y="5" width="5" height="5" fill="#dfe5ea" /></I>
);
const WifiIcon = () => (
  <I s={14}><path d="M1 13C2 6 7 2 13 2M4 13c1-4 4-7 9-7M7 13c1-2 3-4 6-4" fill="none" stroke="#9aa6b0" /><circle cx="12" cy="12" r="1.3" fill="#dfe5ea" /></I>
);
const VolumeIcon = () => (
  <I s={14}><path d="M2 5h3l3-3v11l-3-3H2z" fill="none" stroke="#c8d0d6" /><path d="M10 5c1 2 1 3 0 5M12 3c2 3 2 6 0 9" fill="none" stroke="#7e8a94" /></I>
);
const PenIcon = () => (
  <I><path d="M2 15c2-1 2-4 4-5s3 1 5-2 3-5 1-6-3 3-3 6 0 4-2 5" fill="none" stroke="#dfe5ea" strokeWidth="1.2" /></I>
);
const NotifyIcon = () => (
  <I s={15}><path d="M1 1h14v10H6l-3 3v-3H1z" fill="#e9edf0" /><path d="M3 4h10M3 7h10" stroke="#5a6673" /></I>
);
const RecMenu = () => <I s={12}><path d="M2 3h12M2 8h12M2 13h12" stroke="#777" strokeWidth="1.4" /></I>;
const RecPin = () => <I s={12}><path d="M5 1h6v6l2 3H3l2-3zM8 10v5" fill="#3f8fe0" stroke="#3f8fe0" /></I>;
const RecCamera = () => (
  <I s={14}><path d="M1 4h3l1-2h6l1 2h3v10H1z" fill="#cfcfcf" /><circle cx="8" cy="9" r="3" fill="#333" /></I>
);
const RecPen = () => <I s={13}><path d="M2 14l1-4 8-8 3 3-8 8z" fill="#3f8fe0" /></I>;
const RecClose = () => <I s={11}><path d="M2 2l12 12M14 2L2 14" stroke="#8a8f94" strokeWidth="1.6" /></I>;
const RecPause = () => <I s={12}><path d="M3 1h4v14H3zM9 1h4v14H9z" fill="#c9423a" /></I>;
const RecStop = () => <I s={12}><rect x="1" y="1" width="14" height="14" fill="#d8503a" /></I>;

const menus = ["File", "View", "Insert", "Charts", "Tools", "Window", "Help"];
const periods = ["M1", "M5", "M15", "M30", "H1", "H4", "D1", "W1", "MN"];

const Window = ({ title, width, active, pl, pr, br, children }) => (
  <ChartWindow $w={width} $active={active} $pl={pl} $pr={pr}>
    <WinHeader $active={active} $pl={pl} $pr={pr} $br={br}>
      <ChartTag muted={!active} />
      {title}
      <HeaderBtns>
        <HeaderBtn $active={active}><MinBar /></HeaderBtn>
        <HeaderBtn $active={active}><MaxBox $active={active} /></HeaderBtn>
        {!active && <HeaderBtn $active><I s={11}><path d="M3 3l10 10M13 3L3 13" stroke="#f4f7fa" strokeWidth="3" /></I></HeaderBtn>}
      </HeaderBtns>
    </WinHeader>
    {children}
  </ChartWindow>
);

export default function App() {
  return (
    <>
      <GlobalStyle />
      <Page>
        <BlurredSide />
        <Main>
          <Upper>
            <WindowEdge />
            <AppWindow>
              <TitleBar>
                <MLogo />
                <TitleText>69455609: Mtrading-Live - Servicecomsvg LLC</TitleText>
                <WinControls>
                  <MinGlyph />
                  <MaxGlyph />
                </WinControls>
              </TitleBar>
              <MenuBar>
                {menus.map((m) => <span key={m}>{m}</span>)}
              </MenuBar>
              <ToolRow $h={24}>
                <Strip>
                  <DropBtn><NewChartIcon /><Caret /></DropBtn>
                  <DropBtn $w={31}><ProfilesIcon /><Caret /></DropBtn>
                  <ToolBtn><WatchIcon /></ToolBtn>
                  <ToolBtn><NavCrossIcon /></ToolBtn>
                  <ToolBtn><FolderStarIcon /></ToolBtn>
                  <ToolBtn $on><PanelIcon /></ToolBtn>
                  <ToolBtn><TesterIcon /></ToolBtn>
                  <Sep />
                  <LabelBtn $w={73}><OrderIcon />New Order</LabelBtn>
                  <ToolBtn><GoldIcon /></ToolBtn>
                  <ToolBtn><DeskIcon /></ToolBtn>
                  <ToolBtn><GlobeIcon /></ToolBtn>
                  <LabelBtn $w={84} $on><AutoIcon />AutoTrading</LabelBtn>
                  <Sep $m={1} />
                  <ToolBtn><BarsIcon /></ToolBtn>
                  <ToolBtn $on><CandleIcon /></ToolBtn>
                  <ToolBtn><LineIcon /></ToolBtn>
                  <Sep />
                  <ToolBtn><ZoomIcon plus /></ToolBtn>
                  <ToolBtn><ZoomIcon /></ToolBtn>
                  <ToolBtn><TileIcon /></ToolBtn>
                  <Sep />
                  <ToolBtn><ShiftIcon color="#3fa648" /></ToolBtn>
                  <ToolBtn $on><ShiftIcon color="#d9694a" /></ToolBtn>
                  <Sep />
                  <DropBtn $w={30}><IndicatorIcon /><Caret /></DropBtn>
                  <DropBtn $w={33}><ClockIcon /><Caret /></DropBtn>
                  <DropBtn $w={26}><TemplateIcon /><Caret /></DropBtn>
                </Strip>
                <SearchGlyph><MagnifierIcon /></SearchGlyph>
              </ToolRow>
              <ToolRow $h={24} $last>
                <Strip>
                  <ToolBtn $on><PointerIcon /></ToolBtn>
                  <ToolBtn><CrossIcon /></ToolBtn>
                  <Sep />
                  <ToolBtn $w={22}><VLineIcon /></ToolBtn>
                  <ToolBtn><HLineIcon /></ToolBtn>
                  <ToolBtn><TrendIcon /></ToolBtn>
                  <ToolBtn><ChannelIcon /></ToolBtn>
                  <ToolBtn><FiboIcon /></ToolBtn>
                  <ToolBtn><LetterAIcon /></ToolBtn>
                  <ToolBtn><TextBoxIcon /></ToolBtn>
                  <DropBtn $w={29}><ShapesIcon /><Caret /></DropBtn>
                  <Sep $m={2} />
                  {periods.map((p, i) => <Period key={p} $on={i === 0}>{p}</Period>)}
                </Strip>
              </ToolRow>
              <Mdi>
                <Window title="USDJPY,M1" width={637} pl={7} pr={5} br={7}>
                  <UsdChart />
                </Window>
                <Window title="EURGBP,M1" width={612} active pl={6} pr={0} br={11}>
                  <EurChart />
                </Window>
              </Mdi>
              <TabBar>
                <Tab $w={71}>USDJPY,M1</Tab>
                <Tab $w={69} $active>EURGBP,M1</Tab>
              </TabBar>
              <Terminal>
                <TerminalClose>×</TerminalClose>
                <BalancePanel>
                  <Dot />
                  <span>Balance: 0.00 USD</span>
                  <span>Profit/Loss: 0.00</span>
                  <span>Equity: 0.00</span>
                  <span>Free margin: 0.00</span>
                </BalancePanel>
              </Terminal>
              <StatusBar>
                <StatusHelp>For Help, press F1</StatusHelp>
                <StatusCell $w={99}>Default</StatusCell>
                <StatusCell $w={87}>2026.01.27 17:37</StatusCell>
                <StatusCell $w={60}>O: 0.86893</StatusCell>
                <StatusCell $w={59}>H: 0.86895</StatusCell>
                <StatusCell $w={56}>L: 0.86890</StatusCell>
                <StatusCell $w={59}>C: 0.86893</StatusCell>
                <StatusCell $w={56} />
                <StatusCell $w={90}><SignalIcon />486/4 kb</StatusCell>
              </StatusBar>
            </AppWindow>
          </Upper>
          <Taskbar>
            <StartBtn><WinLogo /></StartBtn>
            <SearchBox>
              <SearchRing />
              Type here to search
              <MicSlot><MicIcon /></MicSlot>
            </SearchBox>
            <TaskIcon><TaskViewIcon /></TaskIcon>
            <TaskIcon><EdgeIcon /></TaskIcon>
            <TaskIcon $running><FolderIcon /></TaskIcon>
            <TaskIcon><StoreIcon /></TaskIcon>
            <TaskIcon><MailIcon /></TaskIcon>
            <TaskIcon><CAppIcon /></TaskIcon>
            <TaskIcon><ChromeIcon /></TaskIcon>
            <TaskIcon $on $running><MLogo s={20} /></TaskIcon>
            <TaskIcon $running><TelegramIcon /></TaskIcon>
            <TaskIcon $running><ChromeIcon inner="#c9a98a" /></TaskIcon>
            <TaskIcon $running><NotesIcon /></TaskIcon>
            <TaskIcon $running><WinrarIcon /></TaskIcon>
            <Tray>
              <TrayIcon $w={33}><PeopleIcon /></TrayIcon>
              <TrayIcon $w={30}><ChevronIcon /></TrayIcon>
              <TrayIcon $w={26}><BatteryIcon /></TrayIcon>
              <TrayIcon $w={26}><WifiIcon /></TrayIcon>
              <TrayIcon $w={26}><VolumeIcon /></TrayIcon>
              <TrayIcon $w={32}><PenIcon /></TrayIcon>
              <Clock>
                <ClockTime>11:56 PM</ClockTime>
                <ClockDate>1/27/2026</ClockDate>
              </Clock>
              <Notify><NotifyIcon /></Notify>
            </Tray>
          </Taskbar>
        </Main>
        <RecorderBar>
          <RecMenu />
          <RecPin />
          <RecorderSize>1920x1080</RecorderSize>
          <Watermark>www.BANDICAM.com</Watermark>
          <RecorderTools>
            <RecPause />
            <RecStop />
            <RecCamera />
            <RecPen />
            <RecClose />
          </RecorderTools>
        </RecorderBar>
        <RightDock>
          <DockBlue />
          {range(1, 11, 1).map((i) => <DockItem key={i} />)}
        </RightDock>
      </Page>
    </>
  );
}
